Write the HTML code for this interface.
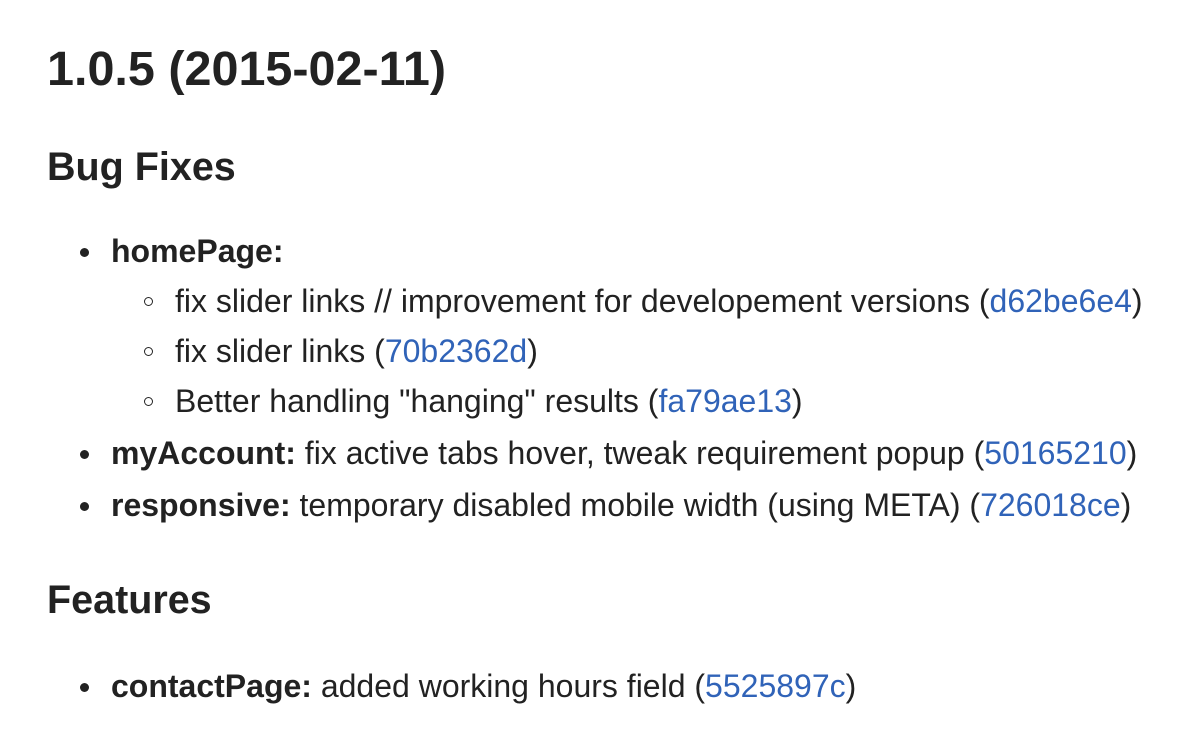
<!DOCTYPE html>
<html><head><meta charset="utf-8"><style>
body{margin:0;width:1204px;height:754px;background:#fff;color:#222;font-family:"Liberation Sans",Helvetica,Arial,sans-serif;position:relative;overflow:hidden}
.l{position:absolute;white-space:nowrap;font-size:32px;line-height:40px;height:40px}
h1,h2{position:absolute;margin:0;white-space:nowrap;font-weight:bold}
h1{left:47px;top:44px;font-size:48.5px;line-height:50px}
h2{left:47px;font-size:39.5px;line-height:44px}
a{color:#3063b8;text-decoration:none}
b{font-weight:bold}
.d::before{content:"";position:absolute;left:-31px;top:17px;width:9px;height:9px;border-radius:50%;background:#222}
.c::before{content:"";position:absolute;left:-31px;top:16px;width:7px;height:7px;border-radius:50%;border:1.6px solid #222}
</style></head><body>
<h1>1.0.5 (2015-02-11)</h1>
<h2 style="top:145px">Bug Fixes</h2>
<div class="l d" style="left:111px;top:231px"><b>homePage:</b></div>
<div class="l c" style="left:175px;top:281px">fix slider links // improvement for developement versions (<a>d62be6e4</a>)</div>
<div class="l c" style="left:175px;top:331px">fix slider links (<a>70b2362d</a>)</div>
<div class="l c" style="left:175px;top:381px">Better handling "hanging" results (<a>fa79ae13</a>)</div>
<div class="l d" style="left:111px;top:433px"><b>myAccount:</b> fix active tabs hover, tweak requirement popup (<a>50165210</a>)</div>
<div class="l d" style="left:111px;top:485px"><b>responsive:</b> temporary disabled mobile width (using META) (<a>726018ce</a>)</div>
<h2 style="top:578px">Features</h2>
<div class="l d" style="left:111px;top:666px"><b>contactPage:</b> added working hours field (<a>5525897c</a>)</div>
</body></html>
